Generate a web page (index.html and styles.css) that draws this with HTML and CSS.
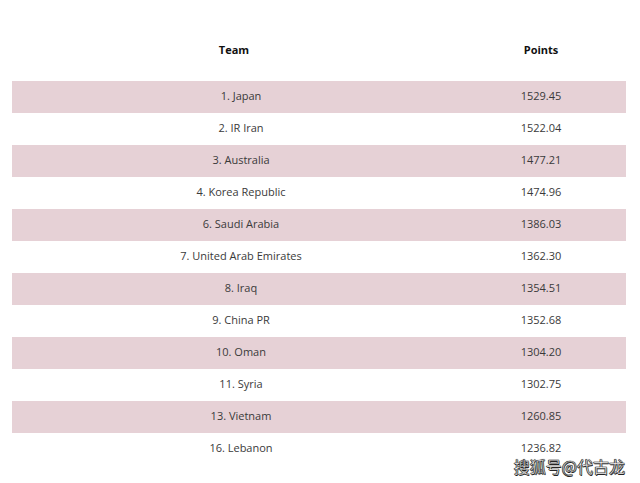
FILE: index.html
```html
<!DOCTYPE html>
<html>
<head>
<meta charset="utf-8">
<link rel="stylesheet" href="styles.css">
</head>
<body>
<div class="page">
  <table class="ranking">
    <thead>
      <tr><th class="team">Team</th><th class="pts">Points</th></tr>
    </thead>
    <tbody>
      <tr class="odd"><td>1. Japan</td><td>1529.45</td></tr>
      <tr><td>2. IR Iran</td><td>1522.04</td></tr>
      <tr class="odd"><td>3. Australia</td><td>1477.21</td></tr>
      <tr><td>4. Korea Republic</td><td>1474.96</td></tr>
      <tr class="odd"><td>6. Saudi Arabia</td><td>1386.03</td></tr>
      <tr><td>7. United Arab Emirates</td><td>1362.30</td></tr>
      <tr class="odd"><td>8. Iraq</td><td>1354.51</td></tr>
      <tr><td>9. China PR</td><td>1352.68</td></tr>
      <tr class="odd"><td>10. Oman</td><td>1304.20</td></tr>
      <tr><td>11. Syria</td><td>1302.75</td></tr>
      <tr class="odd"><td>13. Vietnam</td><td>1260.85</td></tr>
      <tr><td>16. Lebanon</td><td>1236.82</td></tr>
    </tbody>
  </table>
  <div class="watermark">搜狐号@代古龙</div>
</div>
</body>
</html>
```
FILE: styles.css
```css
html, body {
  margin: 0;
  padding: 0;
  background: #ffffff;
}
.page {
  position: relative;
  width: 640px;
  height: 483px;
  padding: 17px 14px 0 12px;
  box-sizing: border-box;
  font-family: "Open Sans", "Liberation Sans", sans-serif;
}
.ranking {
  width: 614px;
  border-collapse: collapse;
  border-spacing: 0;
}
.ranking th {
  height: 64px;
  padding: 0;
  font-size: 11px;
  font-weight: 700;
  color: #111;
  text-align: center;
  vertical-align: middle;
}
.ranking th.team { width: 444px; }
.ranking td {
  height: 32px;
  padding: 0 0 2px 0;
  box-sizing: border-box;
  font-size: 11px;
  line-height: 14px;
  color: #3a3a3a;
  text-align: center;
  vertical-align: middle;
}
.ranking td:first-child {
  padding-left: 14px;
}
.ranking tr.odd td {
  background: #e6d1d6;
}
.watermark {
  position: absolute;
  right: 15px;
  bottom: 6px;
  font-family: "Noto Sans CJK SC", sans-serif;
  font-size: 16px;
  font-weight: 400;
  line-height: 21px;
  color: #ffffff;
  -webkit-text-stroke: 0.4px #333;
  text-shadow: 0 0 1px #222, 0.5px 0.5px 0.5px #222, -0.5px -0.5px 0.5px #222;
}
```
